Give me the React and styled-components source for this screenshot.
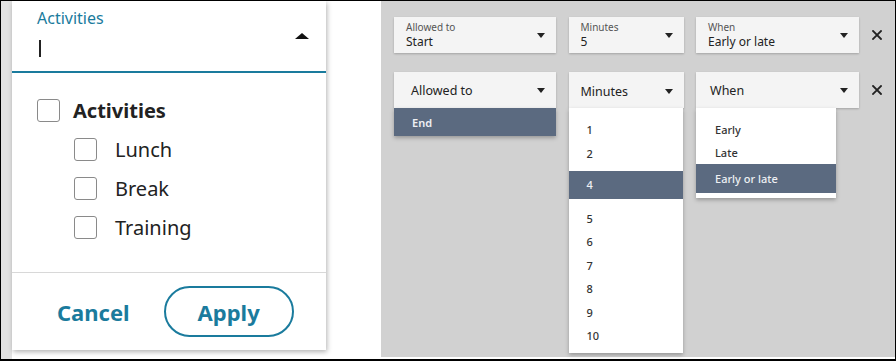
import styled, { createGlobalStyle } from 'styled-components';

const GlobalStyle = createGlobalStyle`
  html, body { margin: 0; padding: 0; background: #fff; }
  * { box-sizing: border-box; }
`;

const TEAL = '#1a7b9d';
const SLATE = '#5b6a80';

// --- frame ---

const Frame = styled.div`
  width: 896px;
  height: 361px;
  border: 1px solid #000;
  border-bottom-width: 2px;
  display: flex;
  background: #fff;
  font-family: 'Noto Sans', 'Open Sans', sans-serif;
  overflow: hidden;
`;

// --- left: multiselect ---

const LeftArea = styled.div`
  width: 380px;
  border-left: 11px solid #e2e2e2;
  background: #fff;
  flex-shrink: 0;
`;

const Panel = styled.div`
  width: 314px;
  height: 349px;
  background: #fff;
  display: flex;
  flex-direction: column;
  box-shadow: 1px 2px 5px rgba(0, 0, 0, 0.3);
`;

const Header = styled.div`
  height: 72px;
  border-bottom: 2px solid ${TEAL};
  display: flex;
  justify-content: space-between;
  align-items: flex-start;
  padding: 6px 17px 0 25px;
`;

const FieldLabel = styled.div`
  color: ${TEAL};
  font-size: 16px;
  line-height: 22px;
`;

const Cursor = styled.div`
  width: 2px;
  height: 17px;
  background: #222;
  margin: 11px 0 0 2px;
`;

const CaretUp = styled.div`
  width: 0;
  height: 0;
  border-left: 7px solid transparent;
  border-right: 7px solid transparent;
  border-bottom: 6px solid #111;
  margin-top: 26px;
`;

const OptionList = styled.div`
  flex: 1;
  padding: 18px 0 0 25px;
`;

const OptionRow = styled.label`
  display: flex;
  align-items: center;
  height: 39px;
  padding-left: ${({ $indent }) => ($indent ? 37 : 0)}px;
  gap: ${({ $indent }) => ($indent ? 18 : 13)}px;
  font-size: 20px;
  font-weight: ${({ $bold }) => ($bold ? 700 : 400)};
  color: #222;
`;

const Box = styled.span`
  width: 23px;
  height: 23px;
  border: 1.5px solid #8a8a8a;
  border-radius: 3px;
  background: #fff;
  flex-shrink: 0;
`;

const Footer = styled.div`
  height: 78px;
  border-top: 1px solid #d8d8d8;
  display: flex;
  align-items: center;
  padding-left: 45px;
  gap: 34px;
`;

const TextButton = styled.button`
  border: none;
  background: none;
  padding: 0;
  color: ${TEAL};
  font-family: inherit;
  font-size: 22px;
  font-weight: 700;
`;

const PillButton = styled.button`
  width: 130px;
  height: 51px;
  border: 2.5px solid ${TEAL};
  border-radius: 26px;
  background: #fff;
  color: ${TEAL};
  font-family: inherit;
  font-size: 22px;
  font-weight: 700;
`;

// --- right: select rows ---

const RightArea = styled.div`
  flex: 1;
  background: #d1d1d1;
  padding: 16px 0 0 13px;
  display: flex;
  flex-direction: column;
  gap: 19px;
  margin-bottom: 2px;
`;

const SelectRow = styled.div`
  display: grid;
  grid-template-columns: 162px 115px 163px 10px;
  column-gap: 12.5px;
  align-items: center;
`;

const FieldWrap = styled.div`
  position: relative;
`;

const Field = styled.div`
  height: 36px;
  background: #f4f4f4;
  box-shadow: 0 1px 2px rgba(0, 0, 0, 0.22);
  display: flex;
  align-items: center;
  justify-content: space-between;
  padding: ${({ $pad }) => `0 11px 0 ${$pad}px`};
`;

const Stack = styled.div`
  display: flex;
  flex-direction: column;
  color: #222;
`;

const Small = styled.span`
  font-size: 10px;
  line-height: 13px;
  color: #555;
`;

const Value = styled.span`
  font-size: 12px;
  line-height: 16px;
`;

const Placeholder = styled.span`
  font-size: 12.5px;
  color: #222;
  margin-top: ${({ $drop }) => ($drop ? 3 : 0)}px;
`;

const CaretDown = styled.div`
  width: 0;
  height: 0;
  border-left: 4.5px solid transparent;
  border-right: 4.5px solid transparent;
  border-top: 5px solid #222;
  margin-top: ${({ $top }) => $top || 0}px;
`;

const Menu = styled.div`
  position: absolute;
  top: 100%;
  left: 0;
  width: ${({ $w }) => $w}px;
  background: #fff;
  padding: ${({ $pt, $pb }) => `${$pt}px 0 ${$pb}px`};
  box-shadow: 0 2px 4px rgba(0, 0, 0, 0.28);
  z-index: 2;
`;

const MenuItem = styled.div`
  height: ${({ $h }) => $h || 23}px;
  display: flex;
  align-items: center;
  padding-left: ${({ $pad }) => $pad}px;
  font-size: 11px;
  font-weight: ${({ $strong }) => ($strong ? 600 : 500)};
  color: ${({ $active }) => ($active ? '#eef0f3' : '#333')};
  background: ${({ $active }) => ($active ? SLATE : 'transparent')};
  margin: ${({ $gapTop, $gapBottom }) => `${$gapTop || 0}px 0 ${$gapBottom || 0}px`};
`;

const CloseIcon = () => (
  <svg width="10" height="10" viewBox="0 0 10 10">
    <path d="M1 1 L9 9 M9 1 L1 9" stroke="#222" strokeWidth="1.8" strokeLinecap="square" />
  </svg>
);

const minutes = ['1', '2', '4', '5', '6', '7', '8', '9', '10'];

const App = () => {
  return (
    <>
      <GlobalStyle />
      <Frame>
        <LeftArea>
          <Panel>
            <Header>
              <div>
                <FieldLabel>Activities</FieldLabel>
                <Cursor />
              </div>
              <CaretUp />
            </Header>
            <OptionList>
              <OptionRow $bold><Box />Activities</OptionRow>
              {['Lunch', 'Break', 'Training'].map((o) => (
                <OptionRow key={o} $indent><Box />{o}</OptionRow>
              ))}
            </OptionList>
            <Footer>
              <TextButton>Cancel</TextButton>
              <PillButton>Apply</PillButton>
            </Footer>
          </Panel>
        </LeftArea>

        <RightArea>
          <SelectRow>
            <Field $pad={12}>
              <Stack><Small>Allowed to</Small><Value>Start</Value></Stack>
              <CaretDown />
            </Field>
            <Field $pad={12}>
              <Stack><Small>Minutes</Small><Value>5</Value></Stack>
              <CaretDown />
            </Field>
            <Field $pad={12}>
              <Stack><Small>When</Small><Value>Early or late</Value></Stack>
              <CaretDown />
            </Field>
            <CloseIcon />
          </SelectRow>

          <SelectRow>
            <FieldWrap>
              <Field $pad={17}>
                <Placeholder>Allowed to</Placeholder>
                <CaretDown />
              </Field>
              <Menu $w={162} $pt={0} $pb={0}>
                <MenuItem $active $strong $h={28} $pad={18}>End</MenuItem>
              </Menu>
            </FieldWrap>
            <FieldWrap>
              <Field $pad={12}>
                <Placeholder $drop>Minutes</Placeholder>
                <CaretDown $top={2} />
              </Field>
              <Menu $w={114} $pt={10} $pb={6}>
                {minutes.map((m) => (
                  <MenuItem
                    key={m}
                    $pad={18}
                    $active={m === '4'}
                    $h={m === '4' ? 28 : 23.4}
                    $gapTop={m === '4' ? 6 : 0}
                    $gapBottom={m === '4' ? 8 : 0}
                  >
                    {m}
                  </MenuItem>
                ))}
              </Menu>
            </FieldWrap>
            <FieldWrap>
              <Field $pad={14}>
                <Placeholder>When</Placeholder>
                <CaretDown />
              </Field>
              <Menu $w={140} $pt={10} $pb={5}>
                <MenuItem $pad={19}>Early</MenuItem>
                <MenuItem $pad={19}>Late</MenuItem>
                <MenuItem $pad={19} $active $h={29}>Early or late</MenuItem>
              </Menu>
            </FieldWrap>
            <CloseIcon />
          </SelectRow>
        </RightArea>
      </Frame>
    </>
  );
};

export default App;
